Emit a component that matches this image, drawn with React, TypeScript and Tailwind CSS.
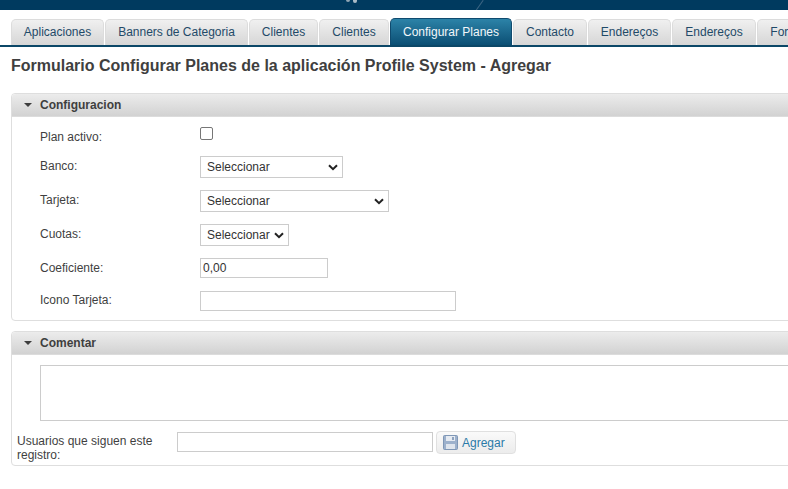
import React from 'react';

const font = { fontFamily: '"Liberation Sans", Arial, sans-serif' };

function Tab({ label, width, active }: { label: string; width: string; active?: boolean }) {
    if (active) {
        return (
            <div className={`${width} h-[27px] shrink-0 flex items-center justify-center pb-[1px] rounded-t-[5px] border border-b-0 border-[#0f4a6e] bg-gradient-to-b from-[#2c83a8] to-[#0b4f74] text-[12px] text-[#f2f7fa]`}>
                {label}
            </div>
        );
    }
    return (
        <div className={`${width} h-[26px] shrink-0 flex items-center justify-center pb-[1px] rounded-t-[5px] border border-b-0 border-[#dcdcdc] bg-gradient-to-b from-[#f0f0f0] to-[#d6d6d6] text-[12px] text-[#1f4a68]`}>
            {label}
        </div>
    );
}

function Section({ title, children }: { title: string; children: React.ReactNode }) {
    return (
        <div className="ml-[11px] -mr-[20px] border border-[#dedede] rounded-[4px] bg-white">
            <div className="h-[23px] flex items-center pl-[12px] rounded-t-[4px] border-b border-[#dcdcdc] bg-gradient-to-b from-[#ececec] to-[#d2d2d2]">
                <svg width="8" height="4" viewBox="0 0 8 4" className="mr-[8px]"><path d="M0 0h8L4 4z" fill="#3d3d3d" /></svg>
                <span className="text-[12px] font-bold text-[#3f3f3f]">{title}</span>
            </div>
            {children}
        </div>
    );
}

function Row({ label, height, labelTop, children }: { label: string; height: string; labelTop: string; children: React.ReactNode }) {
    return (
        <div className={`flex ${height}`}>
            <div className={`w-[188px] pl-[28px] ${labelTop} text-[12px] leading-[14px] text-[#3f3f3f]`}>{label}</div>
            {children}
        </div>
    );
}

function FakeSelect({ width }: { width: string }) {
    return (
        <div className={`${width} h-[22px] flex items-center justify-between pl-[6px] pr-[4px] border border-[#cccccc] bg-white text-[12px] text-[#333333]`}>
            <span>Seleccionar</span>
            <svg width="10" height="7" viewBox="0 0 10 7"><path d="M1 1.2l4 4 4-4" fill="none" stroke="#222222" strokeWidth="2" /></svg>
        </div>
    );
}

export default function App() {
    return (
        <div className="w-[788px] h-[489px] overflow-hidden bg-white" style={font}>
            <div className="relative h-[10px] bg-[#003a5f] overflow-hidden">
                <div className="absolute left-[346px] -top-[2px] flex gap-[3px]">
                    <div className="w-[4px] h-[4px] rounded-full bg-[#8fa5b5]" />
                    <div className="w-[4px] h-[5px] rounded-full bg-[#a9bac6]" />
                </div>
                <div className="absolute left-[479px] -top-[1px] w-[1px] h-[13px] rotate-[35deg] bg-[#3c6583]" />
            </div>
            <div className="h-[7px]" />
            <div className="flex items-end gap-[1px] pl-[11px] h-[28px] border-b-[2px] border-[#0b4767] overflow-hidden box-content">
                <Tab label="Aplicaciones" width="w-[93px]" />
                <Tab label="Banners de Categoria" width="w-[143px]" />
                <Tab label="Clientes" width="w-[69px]" />
                <Tab label="Clientes" width="w-[70px]" />
                <Tab label="Configurar Planes" width="w-[122px]" active />
                <Tab label="Contacto" width="w-[74px]" />
                <Tab label="Endereços" width="w-[83px]" />
                <Tab label="Endereços" width="w-[84px]" />
                <Tab label="Formulario" width="w-[84px]" />
            </div>
            <h1 className="ml-[11px] mt-[10px] mb-[18px] text-[16px] leading-[18px] font-bold text-[#3f3f3f]">
                Formulario Configurar Planes de la aplicación Profile System - Agregar
            </h1>
            <Section title="Configuracion">
                <div className="pt-[10px] pb-[9px]">
                    <Row label="Plan activo:" height="h-[29px]" labelTop="pt-[3px]">
                        <div className="w-[13px] h-[13px] border border-[#767676] rounded-[2px] bg-white" />
                    </Row>
                    <Row label="Banco:" height="h-[34px]" labelTop="pt-[3px]"><FakeSelect width="w-[143px]" /></Row>
                    <Row label="Tarjeta:" height="h-[34px]" labelTop="pt-[3px]"><FakeSelect width="w-[189px]" /></Row>
                    <Row label="Cuotas:" height="h-[34px]" labelTop="pt-[3px]"><FakeSelect width="w-[89px]" /></Row>
                    <Row label="Coeficiente:" height="h-[33px]" labelTop="pt-[3px]">
                        <div className="w-[128px] h-[20px] flex items-center pl-[2px] border border-[#cccccc] text-[12px] text-[#333333]">0,00</div>
                    </Row>
                    <Row label="Icono Tarjeta:" height="h-[20px]" labelTop="pt-[2px]">
                        <div className="w-[256px] h-[20px] border border-[#cccccc]" />
                    </Row>
                </div>
            </Section>
            <div className="h-[10px]" />
            <Section title="Comentar">
                <div className="pl-[28px] pt-[10px]">
                    <div className="h-[56px] border border-[#cccccc] w-[800px]" />
                </div>
                <div className="flex items-start pl-[5px] pt-[11px] pb-[3px]">
                    <div className="w-[160px] pt-[2px] text-[12px] leading-[14px] text-[#3f3f3f]">Usuarios que siguen este registro:</div>
                    <div className="w-[256px] h-[20px] border border-[#cccccc]" />
                    <div className="ml-[3px] -mt-[1px] w-[80px] h-[23px] flex items-center pl-[6px] border border-[#e0e0e0] rounded-[4px] bg-gradient-to-b from-[#fafafa] to-[#ececec]">
                        <svg width="15" height="15" viewBox="0 0 15 15" className="mr-[4px]">
                            <rect x="0.5" y="0.5" width="14" height="14" rx="1" fill="#9db1cc" stroke="#7f97b6" />
                            <rect x="3" y="1" width="9" height="5" fill="#e6ebf2" />
                            <rect x="3" y="9" width="9" height="5" fill="#dfe5ed" />
                            <rect x="9" y="2" width="2" height="3" fill="#8ea3bf" />
                        </svg>
                        <span className="text-[12px] text-[#2a7aa8]">Agregar</span>
                    </div>
                </div>
            </Section>
        </div>
    );
}
